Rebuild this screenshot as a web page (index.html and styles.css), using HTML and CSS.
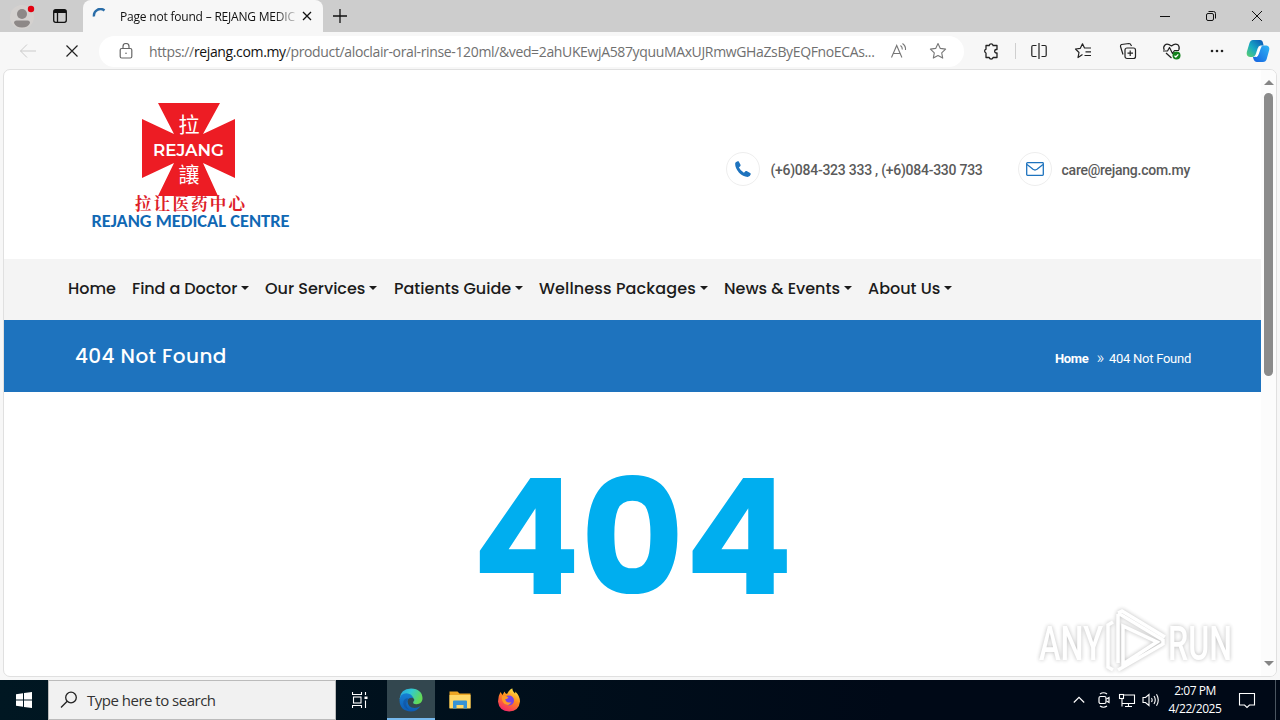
FILE: index.html
```html
<!DOCTYPE html>
<html lang="en">
  <head>
    <meta charset="UTF-8" />
    <meta name="viewport" content="width=device-width, initial-scale=1.0" />
    <title>Page not found – REJANG MEDICAL CENTRE</title>
    <link rel="stylesheet" href="styles.css">
  </head>
  <body>
    <div class="titlebar">
      <div class="profile">
        <svg width="26" height="30" viewBox="0 0 26 30">
          <circle cx="13" cy="16" r="12" fill="#d4d1cf" />
          <circle cx="13" cy="13" r="5" fill="#8d8887" />
          <path d="M5 22q0-2.500 2.500-2.500h11q2.500 0 2.500 2.500-2 4.500-8 4.500t-8-4.500z" fill="#8d8887" />
          <circle cx="22" cy="8" r="3.200" fill="#e3000f" />
        </svg>
      </div>
      <div class="workspaces">
        <svg width="16" height="16" viewBox="0 0 16 16" fill="none" stroke="#111" stroke-width="1.300">
          <rect x="1.700" y="1.700" width="12.600" height="12.600" rx="2" />
          <path d="M2 3.500h12" stroke-width="3" />
          <path d="M5.500 4v10" />
        </svg>
      </div>
      <div class="tab">
        <svg class="spinner" width="16" height="16" viewBox="0 0 16 16" fill="none" stroke="#2a6da8" stroke-width="2.400">
          <path d="M2 8.500a6.500 6.500 0 0 1 10.500-6" />
        </svg>
        <span class="tab-title">Page not found – REJANG MEDIC</span>
        <svg width="10" height="10" viewBox="0 0 10 10" stroke="#111" stroke-width="1.300"><path d="M1 1l8 8M9 1l-8 8" /></svg>
      </div>
      <svg class="new-tab" width="14" height="14" viewBox="0 0 14 14" stroke="#111" stroke-width="1.300"><path d="M7 0v14M0 7h14" /></svg>
      <div class="window-buttons">
        <svg width="12" height="12" viewBox="0 0 12 12" stroke="#111" fill="none"><path d="M1 6.500h10" /></svg>
        <svg width="12" height="12" viewBox="0 0 12 12" stroke="#111" fill="none">
          <rect x="1.500" y="3.500" width="7" height="7" rx="1.500" />
          <path d="M3.500 1.500h5a2 2 0 0 1 2 2v5" />
        </svg>
        <svg width="12" height="12" viewBox="0 0 12 12" stroke="#111" fill="none"><path d="M1 1l10 10M11 1L1 11" /></svg>
      </div>
    </div>

    <div class="toolbar">
      <div class="tool back">
        <svg width="18" height="16" viewBox="0 0 18 16" fill="none" stroke="#cbcbcb"><path d="M17 8H1.500M8 1.500L1.500 8 8 14.500" /></svg>
      </div>
      <div class="tool stop">
        <svg width="14" height="14" viewBox="0 0 14 14" stroke="#222" stroke-width="1.200"><path d="M1.500 1.500l11 11M12.500 1.500l-11 11" /></svg>
      </div>
      <div class="address">
        <svg class="lock" width="14" height="16" viewBox="0 0 14 16" fill="none" stroke="#666" stroke-width="1.200">
          <rect x="1.200" y="5.500" width="11.600" height="9.500" rx="1.500" />
          <path d="M4 5.500V3.500a3 3 0 0 1 6 0v2" />
          <circle cx="7" cy="10.200" r=".8" fill="#666" stroke="none" />
        </svg>
        <span class="url">https://<b>rejang.com.my</b>/product/aloclair-oral-rinse-120ml/&amp;ved=2ahUKEwjA587yquuMAxUJRmwGHaZsByEQFnoECAs...</span>
        <svg class="read" width="18" height="18" viewBox="0 0 18 18" fill="none" stroke="#777" stroke-width="1.100">
          <path d="M1.500 15.500L6.700 3.500l5.200 12M3.500 11.500h6.500" />
          <path d="M10.500 3.500q2 1.500 1.800 4M12.500 1.500q3.500 2.500 3 6.500" />
        </svg>
        <svg class="star" width="18" height="18" viewBox="0 0 18 18" fill="none" stroke="#777" stroke-width="1.100" stroke-linejoin="round">
          <path d="M9 1.500l2.300 4.900 5.300.7-3.900 3.700 1 5.300L9 13.500l-4.700 2.600 1-5.300L1.400 7.100l5.300-.7z" />
        </svg>
      </div>
      <div class="tool">
        <svg width="18" height="18" viewBox="0 0 18 18" fill="none" stroke="#222" stroke-width="1.300" stroke-linejoin="round">
          <path d="M4 3.500h3.200a2 2 0 0 1 3.900 0H15v4h-1a1.800 1.800 0 0 0 0 3.500h1v4.500h-3.900a2 2 0 0 1-3.900 0H4V11a2 2 0 0 1 0-3.800z" />
        </svg>
      </div>
      <div class="divider"></div>
      <div class="tool">
        <svg width="18" height="18" viewBox="0 0 18 18" fill="none" stroke="#222" stroke-width="1.200">
          <path d="M9 1v16M6.500 3.500H3a1.200 1.200 0 0 0-1.200 1.200v8.600A1.200 1.200 0 0 0 3 14.500h3.500M11.500 3.500H15a1.200 1.200 0 0 1 1.200 1.200v8.600a1.200 1.200 0 0 1-1.200 1.200h-3.500" />
        </svg>
      </div>
      <div class="tool">
        <svg width="18" height="18" viewBox="0 0 18 18" fill="none" stroke="#222" stroke-width="1.200" stroke-linejoin="round">
          <path d="M8.500 12.500L4 15.500l1-5L1.500 7l4.800-.7L8.500 1.800l2 4.200H17M11.500 9.800H17M10.500 13.500H17" />
        </svg>
      </div>
      <div class="tool">
        <svg width="18" height="18" viewBox="0 0 18 18" fill="none" stroke="#222" stroke-width="1.200" stroke-linejoin="round">
          <rect x="6" y="6" width="10.500" height="10.500" rx="2" />
          <path d="M11.200 8.500v5.500M8.500 11.200H14M4 12.500L1.500 4.500q-.3-1.500 1-2l7.500-1q1.500 0 2 1.500l.5 1" />
        </svg>
      </div>
      <div class="tool">
        <svg width="20" height="18" viewBox="0 0 20 18" fill="none" stroke="#222" stroke-width="1.200" stroke-linejoin="round">
          <path d="M2.200 8Q.8 5 3 3t6.500 1Q13 .8 16 2.800q2 2 .8 5.200M4 11l5.500 5" />
          <path d="M1 9h4.500l2-3.500 3 6 2-3H17" />
          <circle cx="14.500" cy="13.500" r="4" fill="#12811b" stroke="none" />
          <path d="M12.500 13.800l1.300 1.200 2.500-2.700" stroke="#fff" />
        </svg>
      </div>
      <div class="tool">
        <svg width="14" height="4" viewBox="0 0 14 4" fill="#222"><circle cx="2" cy="2" r="1.300" /><circle cx="7" cy="2" r="1.300" /><circle cx="12" cy="2" r="1.300" /></svg>
      </div>
      <div class="tool copilot">
        <svg width="24" height="24" viewBox="0 0 24 24">
          <defs>
            <linearGradient id="cp1" x1="0" y1="1" x2="1" y2="0"><stop offset="0" stop-color="#5fd16a" /><stop offset=".45" stop-color="#18a9c4" /><stop offset="1" stop-color="#0a50b5" /></linearGradient>
            <linearGradient id="cp2" x1="0" y1="1" x2="1" y2="0"><stop offset="0" stop-color="#1560e0" /><stop offset="1" stop-color="#2fb5f5" /></linearGradient>
          </defs>
          <path d="M7 1h7q2.500 0 3 3l.6 2.500h-3q-2 0-3 3l-2 6q-1 2.500-3.500 2.500H4q-4-.5-3.200-5L3.500 4Q4.500 1 7 1z" fill="url(#cp1)" />
          <path d="M17 6.500h3.500q3.500.5 2.700 4.500l-2.500 9q-.8 3-3.700 3h-6q-2.500 0-3.500-3l-.6-2h1.800q2 0 3-3l2.300-6q.8-2.500 3-2.500z" fill="url(#cp2)" />
          <path d="M14 8q-1.500.5-2 2.500l-1.500 5q-.5 2-1.800 2.500h1.800q1.500-.5 2.300-3L14.500 10q.5-2 2-3z" fill="#fff" />
        </svg>
      </div>
    </div>

    <div class="viewport">
      <div class="page">
        <header class="site-header">
          <svg class="logo" width="204" height="134" viewBox="0 0 204 134">
            <path d="M68 3h62l-17 31 32-15v59l-32-15 15 33H68l16-33-32 15V19l32 15z" fill="#ed1c24" />
            <text class="logo-cjk" x="88.500" y="31.500">拉</text>
            <text class="logo-name" x="63" y="55.500" textLength="71" lengthAdjust="spacingAndGlyphs">REJANG</text>
            <text class="logo-cjk" x="88.500" y="82">讓</text>
            <text class="logo-chinese" x="45" y="110" textLength="110">拉让医药中心</text>
            <text class="logo-full" x="1.500" y="127" textLength="198" lengthAdjust="spacingAndGlyphs">REJANG MEDICAL CENTRE</text>
          </svg>
          <div class="contacts">
            <div class="contact phone">
              <span class="round">
                <svg width="18" height="18" viewBox="0 0 16 16" fill="#1e73be"><path d="M1 3.200Q1 1.500 3.200 1l.9.200 1.800 3.300-.2.900-1.300 1.300q1.300 2.800 4.400 4.600l1.600-1.500.8-.1 3.500 2 .2.900q-.7 2.400-2.800 2.400Q8 14.800 4.500 11.300 1 7.500 1 3.200z" /></svg>
              </span>
              <span>(+6)084-323 333 , (+6)084-330 733</span>
            </div>
            <div class="contact mail">
              <span class="round">
                <svg width="18" height="14" viewBox="0 0 18 14" fill="none" stroke="#1e73be" stroke-width="1.300"><rect x=".7" y=".7" width="16.600" height="12.600" rx=".8" /><path d="M1 2.500q4 3 6 4.800 2 1.400 4 0L17 2.500" /></svg>
              </span>
              <span>care@rejang.com.my</span>
            </div>
          </div>
        </header>

        <nav class="site-nav">
          <a class="home">Home</a>
          <a class="drop doctor">Find a Doctor</a>
          <a class="drop services">Our Services</a>
          <a class="drop patients">Patients Guide</a>
          <a class="drop wellness">Wellness Packages</a>
          <a class="drop news">News &amp; Events</a>
          <a class="drop about">About Us</a>
        </nav>

        <div class="banner">
          <h1>404 Not Found</h1>
          <div class="crumbs"><b>Home</b><span class="sep">»</span><span>404 Not Found</span></div>
        </div>

        <main class="error">
          <h2>404</h2>
        </main>
      </div>
      <div class="scrollbar">
        <span class="arrow up"></span>
        <span class="thumb"></span>
        <span class="arrow down"></span>
      </div>
    </div>

    <svg class="watermark" width="206" height="70" viewBox="0 0 206 70">
      <text x="6" y="54" textLength="64" lengthAdjust="spacingAndGlyphs">ANY</text>
      <path d="M80 16l-5 3v42l5 3M85 8v49M85 7l45 27M90 20v38l34-22zM85 64l45-26M130 33v6M85 7l4-2 43 26" />
      <text x="135" y="54" textLength="64" lengthAdjust="spacingAndGlyphs">RUN</text>
    </svg>

    <div class="taskbar">
      <div class="start">
        <svg width="16" height="16" viewBox="0 0 16 16" fill="#fff"><path d="M0 2.200l7-1v6.300H0zM8 1.100L16 0v7.500H8zM0 8.500h7v6.300l-7-1zM8 8.500h8V16l-8-1.100z" /></svg>
      </div>
      <div class="search">
        <svg width="18" height="18" viewBox="0 0 18 18" fill="none" stroke="#222" stroke-width="1.300"><circle cx="11" cy="6.500" r="5.300" /><path d="M7.200 10.300L1 16.500" /></svg>
        <span>Type here to search</span>
      </div>
      <div class="task view">
        <svg width="16" height="16" viewBox="0 0 16 16" fill="none" stroke="#fff" stroke-width="1.100"><path d="M.5 0v2.500h9V0M.5 16v-2.500h9V16M13.500 0v3M13.500 8.500V16" /><rect x="1.500" y="5" width="7.500" height="6" /><path d="M12.500 5.800h3" stroke-width="2.500" /></svg>
      </div>
      <div class="task active">
        <svg width="24" height="24" viewBox="0 0 24 24">
          <defs>
            <linearGradient id="e1" x1="0" y1="0" x2="1" y2=".4"><stop offset="0" stop-color="#269fe0" /><stop offset=".5" stop-color="#31c9d2" /><stop offset="1" stop-color="#62d957" /></linearGradient>
            <linearGradient id="e2" x1="0" y1="0" x2="0" y2="1"><stop offset="0" stop-color="#1680d4" /><stop offset="1" stop-color="#0d5bb3" /></linearGradient>
          </defs>
          <path d="M.5 11Q1.500.5 12 .5 23.500 1 23.500 11q-.5 5-6 5.200-4.500 0-3-2.700 1.500-2-.5-4Q9 6 .5 11z" fill="url(#e1)" />
          <path d="M.5 12Q1 5.500 7.500 5.200q5 .3 6.800 4.800Q9 9 8.500 13.500q.5 6 7 6.500 3.500 0 6-2Q18 23.500 12 23.500.8 23 .5 12z" fill="url(#e2)" />
          <path d="M9.500 10.500Q4.500 16 10 22q-7-3-5.500-9Q6 9.500 9.500 10.500z" fill="#114a94" opacity=".5" />
        </svg>
      </div>
      <div class="task">
        <svg width="22" height="20" viewBox="0 0 22 20">
          <path d="M.5 1.500h8l2 2h11V18H.5z" fill="#eda623" />
          <path d="M.5 5h21v13.500H.5z" fill="#ffd867" />
          <path d="M4 18.500v-7q0-1 1-1h12q1 0 1 1v7h-3.500V15h-7v3.500z" fill="#3593d5" />
        </svg>
      </div>
      <div class="task">
        <svg width="24" height="24" viewBox="0 0 24 24">
          <defs><linearGradient id="ff" x1=".8" y1="0" x2=".3" y2="1"><stop offset="0" stop-color="#fff04a" /><stop offset=".45" stop-color="#ff8a1c" /><stop offset="1" stop-color="#f5246b" /></linearGradient></defs>
          <path d="M3.500 4l2 3 2-3.500Q8 5.500 10 6q3-5.500 5.500-5.500Q15 3 18 5.500q.5-1 .3-2Q23 8 23 13.500 22 23 12.200 23.500 2 23 1 13.500 1 8 3.500 4z" fill="url(#ff)" />
          <circle cx="12" cy="12.500" r="5" fill="#7543e5" />
          <path d="M5 8q4-1 6.500 1.500-1 1.500-3.500 2 2 4.500 6.500 2.500Q12 19 7 15.500 4 12 5 8z" fill="#ff9a25" />
        </svg>
      </div>
      <div class="tray">
        <svg width="12" height="16" viewBox="0 0 12 16" fill="none" stroke="#fff" stroke-width="1.200"><path d="M.8 10.500L6 5.300l5.200 5.200" /></svg>
        <svg class="meet" width="14" height="16" viewBox="0 0 14 16" fill="none" stroke="#fff" stroke-width="1.200"><rect x="2" y="4.500" width="7" height="7" rx="1.500" /><path d="M9.500 7l2.500-1.500v5L9.500 9M3 2Q6.500-.5 10 2M3 14q3.500 2.500 7 0" /></svg>
        <svg width="18" height="16" viewBox="0 0 18 16" fill="none" stroke="#fff" stroke-width="1.100"><path d="M5.500 3h11v8.500H4.500M4 7v7.500M7 14.500h7M10.500 11.500v3" /><rect x="1.500" y="2.500" width="4" height="4" /></svg>
        <svg class="volume" width="18" height="16" viewBox="0 0 18 16" fill="none" stroke="#fff" stroke-width="1.100"><path d="M1 5.500h2.500L7 2.500v11l-3.500-3H1zM9.500 6q1.300 2 0 4M12 4q2.500 4 0 8M14.500 2.200q3.500 5.800 0 11.600" /></svg>
        <div class="clock"><span>2:07 PM</span><span>4/22/2025</span></div>
        <svg class="notify" width="18" height="18" viewBox="0 0 18 18" fill="none" stroke="#fff" stroke-width="1.100"><path d="M1.500 2.500h15v11.500h-5L9 16.500 6.500 14h-5z" /></svg>
        <i class="show-desktop"></i>
      </div>
    </div>
  </body>
</html>
```
FILE: styles.css
```css
* {
  box-sizing: border-box;
}
body {
  margin: 0;
  width: 1280px;
  height: 720px;
  overflow: hidden;
  display: flex;
  flex-direction: column;
  background: #f7f7f7;
  font-family: "Segoe UI", "Open Sans", "Noto Sans", sans-serif;
}
svg {
  display: block;
  flex: none;
}

/* browser window */
.titlebar {
  height: 32px;
  display: flex;
  align-items: center;
  background: #cdcdcd;
}
.profile {
  width: 40px;
  padding-left: 9px;
}
.workspaces {
  width: 43px;
  padding-left: 12px;
}
.tab {
  width: 240px;
  height: 32px;
  display: flex;
  align-items: center;
  padding: 0 11px 0 9px;
  background: #f7f7f7;
  border-radius: 8px 8px 0 0;
}
.spinner {
  margin-right: 12px;
}
.tab-title {
  width: 178px;
  margin-right: 5px;
  white-space: nowrap;
  font-size: 12px;
  letter-spacing: -0.2px;
  color: #111;
  -webkit-mask-image: linear-gradient(90deg, #000 155px, transparent 180px);
  mask-image: linear-gradient(90deg, #000 155px, transparent 180px);
}
.new-tab {
  margin-left: 10px;
}
.window-buttons {
  margin-left: auto;
  margin-right: 17px;
  display: flex;
  gap: 34px;
}
.toolbar {
  height: 38px;
  display: flex;
  align-items: center;
}
.tool {
  width: 44.5px;
  display: flex;
  justify-content: center;
}
.back {
  width: 56px;
}
.stop {
  width: 32px;
}
.address {
  width: 865px;
  height: 31px;
  margin: 0 5px 0 11px;
  padding: 0 17px 0 20px;
  display: flex;
  align-items: center;
  background: #fff;
  border-radius: 16px;
}
.lock {
  margin-right: 16px;
}
.url {
  width: 728px;
  white-space: nowrap;
  font-size: 14px;
  letter-spacing: -0.36px;
  color: #707070;
}
.url b {
  font-weight: 400;
  color: #111;
}
.read {
  margin-left: 13px;
}
.star {
  margin-left: auto;
}
.divider {
  width: 1px;
  height: 16px;
  margin: 0 1px;
  background: #cfcfcf;
}
.copilot {
  width: 38px;
}
.viewport {
  height: 608px;
  margin: -1px 3px 3px;
  display: flex;
  background: #fff;
  border: 1px solid #e0e0e0;
  border-radius: 7px;
  overflow: hidden;
}
.page {
  width: 1257px;
}
.scrollbar {
  flex: 1;
  display: flex;
  flex-direction: column;
  align-items: center;
  padding: 10px 0 10px;
  background: #fcfcfc;
}
.arrow {
  border: 5px solid transparent;
}
.up {
  border-top: 0;
  border-bottom-color: #858585;
}
.down {
  margin-top: auto;
  border-bottom: 0;
  border-top-color: #858585;
}
.thumb {
  width: 9px;
  height: 283px;
  margin-top: 8px;
  border-radius: 5px;
  background: #8b8b8b;
}

/* site */
.site-header {
  height: 189px;
  display: flex;
  justify-content: space-between;
  padding: 30px 71px 0 86px;
}
.logo-cjk {
  font: 21px "Noto Sans CJK TC", sans-serif;
  fill: #fff;
}
.logo-name {
  font: 600 15.5px Montserrat, Inter, sans-serif;
  fill: #fff;
}
.logo-chinese {
  font: 700 16.5px "KaiTi", "Noto Serif CJK SC", "Noto Sans CJK SC", sans-serif;
  fill: #dd2027;
}
.logo-full {
  font: bold 17px Carlito, Lato, sans-serif;
  fill: #1068b4;
}
.contacts {
  display: flex;
  padding-top: 52px;
  gap: 35px;
}
.contact {
  display: flex;
  height: 34px;
  align-items: center;
  gap: 10px;
  padding-top: 1px;
  font: 500 14px Roboto, sans-serif;
  letter-spacing: -0.26px;
  color: #5a5a5a;
  white-space: nowrap;
}
.round {
  width: 34px;
  height: 34px;
  margin-top: -1px;
  display: flex;
  align-items: center;
  justify-content: center;
  border: 1px solid #eee;
  border-radius: 50%;
}
.site-nav {
  height: 61px;
  display: grid;
  grid-template-columns: 64px 133px 129px 145px 185px 144px 100px;
  align-items: center;
  padding: 0 0 3px 64px;
  background: #f4f4f4;
  font: 500 16px Poppins, Inter, sans-serif;
  color: #1b1b1b;
  white-space: nowrap;
}
.doctor {
  letter-spacing: -0.08px;
}
.wellness {
  letter-spacing: 0.12px;
}
.drop::after {
  content: "";
  display: inline-block;
  margin-left: 4px;
  vertical-align: 4px;
  border: 4px solid transparent;
  border-top-color: #1b1b1b;
  border-bottom: 0;
}
.banner {
  height: 72px;
  display: flex;
  justify-content: space-between;
  align-items: center;
  padding: 0 70px 0 71px;
  background: #1e73be;
  color: #fff;
}
.banner h1 {
  margin: 0;
  font: 500 20px Poppins, Inter, sans-serif;
  letter-spacing: 0.42px;
}
.crumbs {
  display: flex;
  align-items: center;
  padding-top: 5px;
  font: 13px Roboto, sans-serif;
  letter-spacing: -0.27px;
}
.sep {
  margin: -2px 5px 0 8px;
  font-size: 17px;
  font-weight: 300;
  line-height: 15px;
}
.error {
  display: flex;
  justify-content: center;
  padding-top: 50px;
}
.error h2 {
  margin: 0;
  font: 700 160px/192px Poppins, Inter, sans-serif;
  color: #00aeef;
}
.watermark {
  position: absolute;
  left: 1033px;
  top: 606px;
  opacity: 0.75;
  filter: drop-shadow(0 0 2px rgba(0, 0, 0, 0.35));
}
.watermark text {
  font: 500 49px Roboto, sans-serif;
  fill: #fff;
}
.watermark path {
  fill: none;
  stroke: #fff;
  stroke-width: 3.5;
}

/* windows taskbar */
.taskbar {
  height: 40px;
  display: flex;
  background: linear-gradient(90deg, #001722, #000917 70%);
  color: #fff;
}
.start,
.task {
  width: 49px;
  display: flex;
  align-items: center;
  justify-content: center;
}
.start {
  width: 48px;
}
.search {
  width: 288px;
  display: flex;
  align-items: center;
  padding-left: 11px;
  gap: 9px;
  background: #f1f1f1;
  border: 1px solid #bbb;
  font-size: 15px;
  letter-spacing: -0.5px;
  color: #333;
}
.view {
  width: 51px;
  padding-right: 3px;
}
.active {
  width: 48px;
  background: #33474f;
  border-bottom: 2px solid #76b9ed;
}
.active svg {
  margin-top: 2px;
}
.tray {
  margin-left: auto;
  display: flex;
  align-items: center;
  gap: 8px;
}
.meet {
  margin: 0 -1px 0 4px;
}
.volume {
  margin: 0 -1px 0 -2px;
}
.clock {
  width: 64px;
  margin-left: -4px;
  display: flex;
  flex-direction: column;
  align-items: center;
  font-size: 12px;
  line-height: 18px;
  letter-spacing: -0.45px;
  white-space: nowrap;
}
.notify {
  margin-left: 3px;
}
.show-desktop {
  width: 5px;
  height: 40px;
  margin-left: 11px;
  border-left: 1px solid #4a5560;
}
```
